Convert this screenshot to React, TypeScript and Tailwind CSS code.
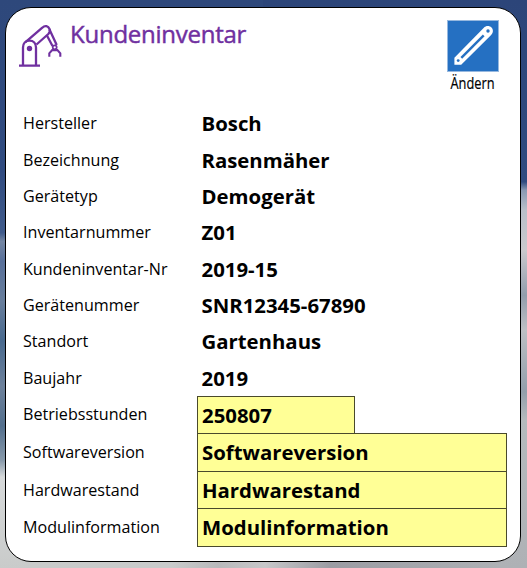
const rows = [
  ["Hersteller", "Bosch"],
  ["Bezeichnung", "Rasenmäher"],
  ["Gerätetyp", "Demogerät"],
  ["Inventarnummer", "Z01"],
  ["Kundeninventar-Nr", "2019-15"],
  ["Gerätenummer", "SNR12345-67890"],
  ["Standort", "Gartenhaus"],
  ["Baujahr", "2019"],
];

const fields = [
  ["Betriebsstunden", "250807"],
  ["Softwareversion", "Softwareversion"],
  ["Hardwarestand", "Hardwarestand"],
  ["Modulinformation", "Modulinformation"],
];

function Backdrop() {
  return (
    <svg className="absolute inset-0 h-full w-full" viewBox="0 0 527 568">
      <defs>
        <linearGradient id="left" x1="0" y1="0" x2="0" y2="1">
          <stop offset="0" stopColor="#2e487b" />
          <stop offset="0.3" stopColor="#304b80" />
          <stop offset="0.41" stopColor="#405b8b" />
          <stop offset="0.425" stopColor="#7486a3" />
          <stop offset="0.46" stopColor="#58709a" />
          <stop offset="0.53" stopColor="#687e9c" />
          <stop offset="0.6" stopColor="#48698e" />
          <stop offset="0.68" stopColor="#6d819b" />
          <stop offset="0.75" stopColor="#536f8d" />
          <stop offset="0.81" stopColor="#8799aa" />
          <stop offset="0.84" stopColor="#d6d9da" />
          <stop offset="1" stopColor="#c9cbca" />
        </linearGradient>
        <linearGradient id="right" x1="0" y1="0" x2="0" y2="1">
          <stop offset="0" stopColor="#2c4579" />
          <stop offset="0.32" stopColor="#304b80" />
          <stop offset="0.335" stopColor="#8999b3" />
          <stop offset="0.37" stopColor="#b9bfc9" />
          <stop offset="0.44" stopColor="#cac9cd" />
          <stop offset="0.52" stopColor="#929dac" />
          <stop offset="0.58" stopColor="#bdbfc4" />
          <stop offset="0.69" stopColor="#939fab" />
          <stop offset="0.74" stopColor="#b5babd" />
          <stop offset="1" stopColor="#aeb1b5" />
        </linearGradient>
        <linearGradient id="bottom">
          <stop offset="0" stopColor="#c9cbca" />
          <stop offset="0.3" stopColor="#c9cbcb" />
          <stop offset="0.4" stopColor="#b8b9bb" />
          <stop offset="0.5" stopColor="#c7c7c9" />
          <stop offset="0.64" stopColor="#9b9ca3" />
          <stop offset="1" stopColor="#aeb1b5" />
        </linearGradient>
      </defs>
      <rect width="264" height="568" fill="url(#left)" />
      <rect x="263" width="264" height="568" fill="url(#right)" />
      <rect x="30" y="555" width="470" height="13" fill="url(#bottom)" />
    </svg>
  );
}

function RobotArm() {
  return (
    <svg className="mt-[16px] h-[44px] w-[44px]" viewBox="19 24 44 44" fill="none" stroke="#7030a0" strokeWidth="2.3">
      <path d="M19 65.700h21M23 65V47.500c0-4 2.500-6.800 6.500-6.800s6.500 2.800 6.500 6.800V65" />
      <circle cx="29.500" cy="48.500" r="2.700" fill="#7030a0" stroke="none" />
      <path d="m25.500 42.200 16.800-14.500c2.700-2.700 6-1.700 7.200 1.300.8 2 .2 3.500-1.200 5L36.500 44.500" />
      <path d="m49.500 29.500 7.200 15.500M46.800 35.300l5.700 10.700" />
      <circle cx="54.700" cy="47.300" r="2" strokeWidth="1.700" />
      <path d="M49.300 56.700v-3.400l2.900-3.200h5.200l2.900 3.200v3.400" strokeWidth="2.100" />
    </svg>
  );
}

function Pencil() {
  return (
    <svg className="block h-[52px] w-[52px]" viewBox="0 0 52 52" fill="#2570c2">
      <rect x=".5" y=".5" width="51" height="51" stroke="#96b8df" />
      <path d="M7.400 37.800 36.600 8c2.500-2.700 5.900-2.500 7.900-.5s2 5.200-.6 7.800L14.200 44.700H7.400Z" fill="white" />
      <circle cx="41" cy="11" r="1.700" />
      <circle cx="11.200" cy="40.600" r="1.400" />
      <path d="m14.300 37.900 22.400-22.600" stroke="#2570c2" strokeWidth="2.400" />
    </svg>
  );
}

export default function App() {
  return (
    <div className="relative h-[568px] w-[527px] overflow-hidden pl-[5px] pt-[7px] font-['Open_Sans',sans-serif] text-black">
      <Backdrop />
      <main className="relative h-[555px] w-[516px] rounded-[26px] border-[1.5px] border-black bg-white">
        <header className="flex h-[97px] pl-[13px]">
          <RobotArm />
          <h1 className="ml-[7px] mt-[8px] w-[377px] text-2xl leading-[36px] tracking-[-0.25px] text-[#7030a0] [-webkit-text-stroke:0.45px_#7030a0]">Kundeninventar</h1>
          <button className="mt-[12px] flex h-[78px] w-[52px] flex-col items-center">
            <Pencil />
            <span className="origin-center scale-x-[.8] text-base leading-[22px] [-webkit-text-stroke:0.2px_black]">Ändern</span>
          </button>
        </header>
        <dl>
          {rows.map(([label, value]) => (
            <div key={label} className="flex h-[36.370px] items-center pl-[17px]">
              <dt className="w-[178.500px] text-[16.130px] leading-6">{label}</dt>
              <dd className="text-[20.350px] leading-7 font-bold">{value}</dd>
            </div>
          ))}
          {fields.map(([label, value], i) => (
            <div key={label} className={i === 0 ? "flex h-[37px] items-center pl-[17px]" : "flex h-[37.800px] items-center pl-[17px]"}>
              <dt className="w-[174px] text-[16.130px] leading-6">{label}</dt>
              <dd className={i === 0 ? "-mb-px flex h-[38px] w-[158px] items-center border border-[#4a4a2c] bg-[#ffff96] pl-1 text-[20.350px] leading-7 font-bold" : "-mb-px flex h-[38.800px] w-[310px] items-center border border-[#4a4a2c] bg-[#ffff96] pb-px pl-1 text-[20.350px] leading-7 font-bold"}>{value}</dd>
            </div>
          ))}
        </dl>
      </main>
    </div>
  );
}
